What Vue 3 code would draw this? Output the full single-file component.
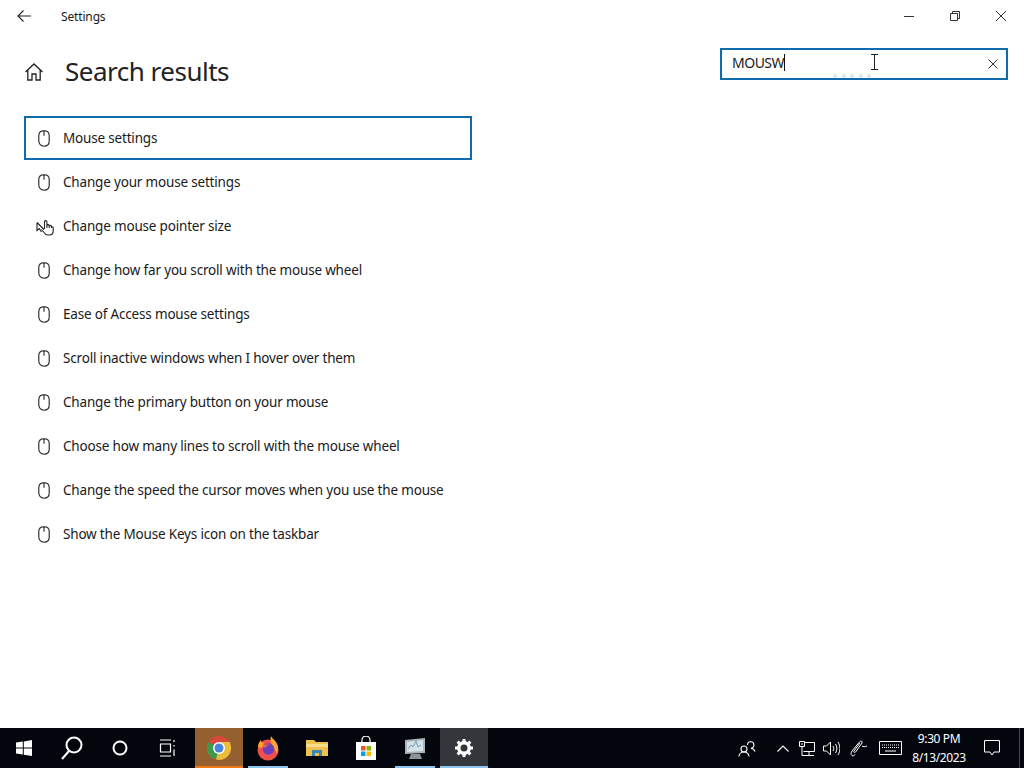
<script setup>
const results = [
  'Mouse settings',
  'Change your mouse settings',
  'Change mouse pointer size',
  'Change how far you scroll with the mouse wheel',
  'Ease of Access mouse settings',
  'Scroll inactive windows when I hover over them',
  'Change the primary button on your mouse',
  'Choose how many lines to scroll with the mouse wheel',
  'Change the speed the cursor moves when you use the mouse',
  'Show the Mouse Keys icon on the taskbar'
]
</script>

<template>
  <div class="screen">
    <header class="titlebar">
      <button class="back" aria-label="Back">
        <svg width="16" height="16" viewBox="0 0 16 16" fill="none" stroke="#222" stroke-width="1.1"><path d="M2 8h13M7.500 2.500 2 8l5.500 5.500"/></svg>
      </button>
      <span class="app-title">Settings</span>
      <div class="window-controls">
        <button class="win-btn" aria-label="Minimize"><svg width="12" height="12" viewBox="0 0 12 12" stroke="#333" fill="none"><path d="M1 6.500h10"/></svg></button>
        <button class="win-btn" aria-label="Restore"><svg width="12" height="12" viewBox="0 0 12 12" stroke="#333" fill="none"><path d="M1.500 3.500h7v7h-7zM3.500 3.500v-2h7v7h-2"/></svg></button>
        <button class="win-btn" aria-label="Close"><svg width="12" height="12" viewBox="0 0 12 12" stroke="#333" fill="none"><path d="M1 1l10 10M11 1 1 11"/></svg></button>
      </div>
    </header>

    <main class="content">
      <div class="heading-row">
        <div class="heading">
          <svg class="home" width="20" height="20" viewBox="0 0 20 20" fill="none" stroke="#222" stroke-width="1.300"><path d="M1.500 10 10 2l8.500 8M3.800 8v10h4.200v-6h4v6h4.200V8"/></svg>
          <h1>Search results</h1>
        </div>
        <div class="search">
          <span class="search-text">MOUSW</span><span class="caret"></span>
          <svg class="clear" width="10" height="10" viewBox="0 0 10 10" stroke="#333" fill="none"><path d="M.500.500l9 9M9.500.500l-9 9"/></svg>
          <svg class="ibeam" width="9" height="16" viewBox="0 0 9 16" stroke="#222" fill="none"><path d="M1 .500h7M1 15.500h7M4.500.500v15"/></svg>
          <div class="progress"><i></i><i></i><i></i><i></i><i></i></div>
        </div>
      </div>

      <ul class="results">
        <li v-for="(r, i) in results" :key="r" class="result" :class="{ focused: i === 0 }">
          <span class="result-icon">
            <svg v-if="i !== 2" width="12" height="17" viewBox="0 0 12 17" fill="none" stroke="#222" stroke-width="1.100"><path d="M6 .800v5M.800 5.500C.800 2.500 2.500.800 6 .800s5.200 1.700 5.200 4.700v5.500c0 3-2 5.200-5.200 5.200S.800 14 .800 11z"/></svg>
            <svg v-else class="hand" width="18" height="17" viewBox="0 0 18 17" fill="none" stroke="#222" stroke-width="1.100"><path d="M1 3.500v8l2.300-2 2.200 3.500M1 3.500l7 7"/><path d="M8.500 10V2.800a1.200 1.200 0 0 1 2.400 0V9M10.900 6.500a1.200 1.200 0 0 1 2.300 0V9M13.200 7.500a1.100 1.100 0 0 1 2.200 0V9M15.400 8.200a1 1 0 0 1 1.800.600V12c0 2.200-1.500 4-3.800 4h-1.600c-1.600 0-2.600-.800-3.300-2L5.500 10.500"/></svg>
          </span>
          <span class="result-label">{{ r }}</span>
        </li>
      </ul>
    </main>

    <footer class="taskbar">
      <div class="tb-item small">
        <svg width="18" height="18" viewBox="0 0 18 18" fill="#fff"><path d="M1 3.500 7.800 2.500v6H1zM8.800 2.400 17 1v7.500H8.800zM1 9.500h6.800v6L1 14.600zM8.800 9.500H17V17l-8.200-1.200z"/></svg>
      </div>
      <div class="tb-item small">
        <svg width="24" height="26" viewBox="0 0 24 26" fill="none" stroke="#fff" stroke-width="2"><circle cx="14" cy="10" r="7.500"/><path d="M9 16 2 24"/></svg>
      </div>
      <div class="tb-item small">
        <svg width="16" height="16" viewBox="0 0 16 16" fill="none" stroke="#fff" stroke-width="2"><circle cx="8" cy="8" r="6.500"/></svg>
      </div>
      <div class="tb-item small last-small">
        <svg width="18" height="18" viewBox="0 0 18 18" fill="none" stroke="#fff" stroke-width="1.200"><path d="M1 1h11M1 17h11M1.500 5h10v8h-10zM15 1v2M15 6v1.500M15 10.500V17"/></svg>
      </div>
      <div class="tb-item app chrome">
        <svg width="26" height="26" viewBox="0 0 26 26"><circle cx="13" cy="13" r="12" fill="#d9483a"/><path d="M13 13 2.600 7A12 12 0 0 0 10 24.600z" fill="#3c9a4c"/><path d="M13 13 10 24.600A12 12 0 0 0 24.500 9.500L24 7H13z" fill="#e9be3a"/><circle cx="13" cy="13" r="6" fill="#fff"/><circle cx="13" cy="13" r="4.500" fill="#4a82e2"/></svg>
      </div>
      <div class="tb-item app">
        <span class="run-bar"></span>
        <svg width="24" height="26" viewBox="0 0 24 26">
          <circle cx="12" cy="15" r="10.500" fill="#ee4f4a"/>
          <path d="M15 1c1 3 5 4 6.500 9 1 3.500.500 6-.500 8.500l-5-8.500c-1.500-3-2-6-1-9z" fill="#fba52c"/>
          <path d="M2 12c0-3 1-5 3-7 0 2 1 3 3 3l-2 5z" fill="#fba52c"/>
          <circle cx="12.500" cy="14" r="5.800" fill="#6d3fc0"/>
          <path d="M6 12c2-2.500 5-3 8-2-3 0-4 1-4 2.500z" fill="#f26b36"/>
        </svg>
      </div>
      <div class="tb-item app">
        <svg width="22" height="18" viewBox="0 0 22 18"><path d="M0 1h8l2 2h12v14H0z" fill="#f0c14f"/><path d="M0 5h22v3H0z" fill="#f7dc8c"/><path d="M6 11h10v6h-3v-3H9v3H6z" fill="#3d87b8"/></svg>
      </div>
      <div class="tb-item app">
        <svg width="22" height="24" viewBox="0 0 22 24"><path d="M7 7V4a4 4 0 0 1 8 0v3" fill="none" stroke="#eee" stroke-width="1.300"/><path d="M1 6h20v18H1z" fill="#fff"/><path d="M6 10h4.500v4.500H6z" fill="#e8562a"/><path d="M11.500 10H16v4.500h-4.500z" fill="#7fba00"/><path d="M6 15.500h4.500V20H6z" fill="#00a4ef"/><path d="M11.500 15.500H16V20h-4.500z" fill="#ffb900"/></svg>
      </div>
      <div class="tb-item app">
        <span class="run-bar"></span>
        <svg width="24" height="24" viewBox="0 0 24 24"><path d="M2 4 22 2v15L2 18z" fill="#a9b4ba"/><path d="M4 6l16-2v11L4 16z" fill="#d6e2e8"/><path d="M5 13l3-4 2 2 3-6 2 6 3-2" fill="none" stroke="#6f9dc0"/><path d="M8 18h9l2 5H6z" fill="#8d9296"/></svg>
      </div>
      <div class="tb-item app active">
        <span class="run-bar wide"></span>
        <svg width="20" height="20" viewBox="0 0 20 20" fill="none"><circle cx="10" cy="10" r="5.200" stroke="#fff" stroke-width="3.400"/><path d="M10 1v3M10 16v3M1 10h3M16 10h3M3.600 3.600l2.100 2.100M14.300 14.300l2.100 2.100M16.400 3.600l-2.100 2.100M5.700 14.300l-2.100 2.100" stroke="#fff" stroke-width="3"/></svg>
      </div>

      <div class="tray">
        <svg class="t-people" width="18" height="17" viewBox="0 0 18 17" fill="none" stroke="#fff" stroke-width="1.100"><circle cx="6" cy="9" r="3"/><path d="M1 16.500c0-2.500 2-4.500 5-4.500s5 2 5 4.500M9.500 5a3.200 3.200 0 1 1 3.500 3.200c2 .300 3.500 1.500 4 3.300"/></svg>
        <svg class="t-chevron" width="12" height="7" viewBox="0 0 12 7" fill="none" stroke="#fff" stroke-width="1.100"><path d="M.500 6.500 6 1l5.500 5.500"/></svg>
        <svg class="t-net" width="16" height="15" viewBox="0 0 16 15" fill="none" stroke="#fff"><path d="M5 1.500h10.500v9H4.500M.500.500h5v5h-5zM2 3h2M10 11v3M5 14.500h10M3 5.500v9h3"/></svg>
        <svg class="t-vol" width="17" height="15" viewBox="0 0 17 15" fill="none" stroke="#fff"><path d="M.500 5h3l4-4v13l-4-4h-3zM10 5c1 1.500 1 3.500 0 5M12.500 3c1.800 2.500 1.800 6.500 0 9M15 1c2.500 4 2.500 9 0 13"/></svg>
        <svg class="t-pen" width="18" height="18" viewBox="0 0 18 18" fill="none" stroke="#fff"><path d="M2 16.500c-1.500-1-1-3 0-4.500L9 3.500c1.500-2 3.500-2 3 .500L6 12.500c-1 1.500-3 1-2-.500L10 4M12 7c1 .800 3 1 5 0M2 16.500c1 .800 2.500 0 3-1"/></svg>
        <svg class="t-kbd" width="23" height="14" viewBox="0 0 23 14" fill="none" stroke="#fff"><path d="M.500.500h22v13H.500z"/><path d="M3 4h17M3 6.500h17" stroke-dasharray="1 1"/><path d="M6 10h11"/></svg>
        <div class="clock"><span>9:30 PM</span><span>8/13/2023</span></div>
        <svg class="t-note" width="16" height="16" viewBox="0 0 16 16" fill="none" stroke="#fff"><path d="M.500.500h15v11.500H10l-2 3-2-3H.500z"/></svg>
        <div class="show-desktop"></div>
      </div>
    </footer>
  </div>
</template>

<style scoped>
.screen {
  width: 1024px;
  height: 768px;
  display: flex;
  flex-direction: column;
  background: #fff;
  color: #1a1a1a;
  font-family: "Noto Sans", "Open Sans", sans-serif;
  overflow: hidden;
}
button { border: 0; background: none; padding: 0; display: flex; align-items: center; justify-content: center; }

.titlebar { height: 32px; display: flex; align-items: center; flex: none; }
.back { width: 48px; height: 32px; }
.app-title { margin-left: 13px; font-size: 12px; letter-spacing: -0.15px; }
.window-controls { margin-left: auto; display: flex; }
.win-btn { width: 46px; height: 32px; }

.content { flex: 1; padding: 0 16px 0 24px; min-height: 0; }
.heading-row { display: flex; justify-content: space-between; align-items: flex-start; height: 84px; }
.heading { display: flex; align-items: center; height: 80px; }
.home { margin-right: 21px; }
h1 { margin: -2px 0 0; font-weight: 400; font-size: 26px; letter-spacing: -0.5px; color: #222; }

.search {
  position: relative;
  width: 288px;
  height: 32px;
  margin-top: 16px;
  box-sizing: border-box;
  border: 2px solid #0f6cb0;
  display: flex;
  align-items: flex-start;
  padding-left: 10px;
  font-size: 14px;
  line-height: 26px;
}
.search-text { letter-spacing: -0.5px; }
.caret { width: 1px; height: 17px; margin-top: 4px; background: #111; }
.clear { position: absolute; right: 8px; top: 9px; }
.ibeam { position: absolute; left: 148px; top: 4px; }
.progress { position: absolute; left: 111px; top: 24px; display: flex; gap: 4.500px; }
.progress i { width: 4px; height: 4px; border-radius: 50%; background: #dbe7f0; }

.results { list-style: none; margin: 0; padding: 0; width: 448px; }
.result { height: 44px; display: flex; align-items: center; box-sizing: border-box; padding-left: 14px; font-size: 13.500px; }
.result.focused { border: 2px solid #0f6cb0; padding-left: 12px; }
.result-icon { position: relative; width: 12px; height: 17px; margin-right: 13px; display: block; }
.result-icon svg { display: block; }
.result-label { letter-spacing: -0.18px; white-space: nowrap; }
.hand { position: absolute; left: -2px; top: 1px; }

.taskbar { height: 40px; flex: none; display: flex; align-items: stretch; background: #04060d; color: #fff; }
.tb-item { position: relative; display: flex; align-items: center; justify-content: center; box-sizing: border-box; }
.tb-item.small { width: 48px; }
.last-small { margin-right: 3px; }
.tb-item.app { width: 48px; margin-right: 1px; }
.chrome { background: #95602f; border-bottom: 2px solid #f07a12; padding-top: 2px; }
.run-bar { position: absolute; left: 4px; right: 4px; bottom: 0; height: 2px; background: #8cc4ee; }
.run-bar.wide { left: 0; right: 0; }
.active { background: #33363b; }

.tray { margin-left: auto; display: flex; align-items: center; position: relative; width: 286px; }
.tray svg { flex: none; }
.t-people { margin-left: 0; }
.t-chevron { margin-left: 21px; }
.t-net { margin-left: 10px; }
.t-vol { margin-left: 8px; }
.t-pen { margin-left: 10px; }
.t-kbd { margin-left: 11px; }
.clock { width: 74px; margin-left: 0; display: flex; flex-direction: column; align-items: center; font-size: 12px; line-height: 19px; letter-spacing: -0.4px; }
.t-note { margin-left: 8px; }
.show-desktop { position: absolute; right: 4px; top: 0; bottom: 0; width: 1px; background: #44464a; }
</style>
